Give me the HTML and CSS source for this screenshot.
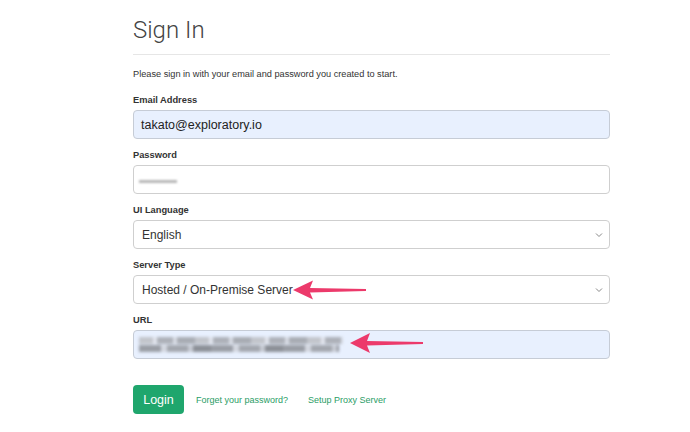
FILE: index.html
```html
<!DOCTYPE html>
<html lang="en">
<head>
<meta charset="UTF-8">
<meta name="viewport" content="width=device-width, initial-scale=1.0">
<title>Sign In</title>
<link rel="stylesheet" href="styles.css">
</head>
<body>
<div class="container">
  <h1>Sign In</h1>
  <p class="intro">Please sign in with your email and password you created to start.</p>

  <div class="field">
    <label>Email Address</label>
    <div class="input autofill">takato@exploratory.io</div>
  </div>
  <div class="field">
    <label>Password</label>
    <div class="input"><span class="blur-pass"></span></div>
  </div>
  <div class="field">
    <label>UI Language</label>
    <div class="input select">
      <span>English</span>
      <svg class="chevron" width="8" height="6" viewBox="0 0 8 6"><path d="M1 1.5 L4 4.5 L7 1.5" fill="none" stroke="#888" stroke-width="1"/></svg>
    </div>
  </div>
  <div class="field">
    <label>Server Type</label>
    <div class="input select">
      <span>Hosted / On-Premise Server</span>
      <svg class="chevron" width="8" height="6" viewBox="0 0 8 6"><path d="M1 1.5 L4 4.5 L7 1.5" fill="none" stroke="#888" stroke-width="1"/></svg>
    </div>
  </div>
  <div class="field">
    <label>URL</label>
    <div class="input autofill"><span class="blur-url"><i></i><i></i></span></div>
  </div>

  <div class="actions">
    <button>Login</button>
    <a href="#">Forget your password?</a>
    <a href="#">Setup Proxy Server</a>
  </div>

  <!-- annotation arrows -->
  <svg class="arrow arrow-server" width="80" height="22" viewBox="0 0 80 22">
    <path d="M0 11 L20 1.5 L17 9 L73 10 L73 12 L17 13.5 L20 20.5 Z" fill="#ec3a6b"/>
  </svg>
  <svg class="arrow arrow-url" width="80" height="22" viewBox="0 0 80 22">
    <path d="M0 11 L20 1 L17 9 L73 10 L73 12 L17 13.5 L20 21 Z" fill="#ec3a6b"/>
  </svg>
</div>
</body>
</html>
```

FILE: styles.css
```css
body {
  margin: 0;
  background: #ffffff;
  font-family: "Liberation Sans", Arial, sans-serif;
  color: #333;
}
.container {
  position: relative;
  width: 477px;
  margin-left: 133px;
  padding-top: 16px;
}
h1 {
  font-family: Roboto, "Liberation Sans", sans-serif;
  font-weight: 300;
  font-size: 24px;
  line-height: 28px;
  color: #444;
  margin: 0;
  padding-bottom: 10px;
  border-bottom: 1px solid #e6e6e6;
}
.intro {
  font-size: 9.2px;
  line-height: 12px;
  margin: 13px 0 14px;
  color: #333;
}
.field {
  margin-bottom: 10px;
}
label {
  display: block;
  font-size: 9.3px;
  font-weight: bold;
  line-height: 12px;
  margin-bottom: 4px;
  color: #333;
}
.input {
  box-sizing: border-box;
  height: 29px;
  border: 1px solid #cfcfcf;
  border-radius: 4px;
  padding: 0 7px;
  display: flex;
  align-items: center;
  font-size: 12.5px;
  color: #222;
  background: #fff;
}
.autofill {
  background: #e8f0fe;
  border-color: #c6ccd6;
}
.select {
  justify-content: space-between;
  padding-left: 8px;
  font-size: 12px;
  color: #333;
}
.chevron {
  margin-right: -1px;
}
.blur-pass {
  width: 38px;
  height: 3px;
  background: #b8b8b8;
  filter: blur(0.9px);
  margin-top: 3px;
  margin-left: -2px;
}
.blur-url {
  display: flex;
  flex-direction: column;
  gap: 1px;
  margin-left: -2px;
  filter: blur(1.6px);
}
.blur-url i {
  display: block;
  height: 7px;
  width: 204px;
  background: repeating-linear-gradient(90deg, #c2c5cc 0 14px, #e1e5ee 14px 18px, #adb1b9 18px 34px, #d8dce5 34px 38px, #a8acb4 38px 56px);
}
.blur-url i + i {
  width: 200px;
  background: repeating-linear-gradient(90deg, #9a9ea6 0 22px, #d3d7e0 22px 28px, #a3a7af 28px 49px, #c6cad3 49px 54px, #8c9098 54px 72px);
}
.actions {
  display: flex;
  align-items: center;
  margin-top: 26px;
}
button {
  font-family: "Liberation Sans", Arial, sans-serif;
  background: #1fa66d;
  color: #fff;
  border: none;
  border-radius: 4px;
  font-size: 12.5px;
  height: 29px;
  width: 51px;
  padding: 0;
  margin-right: 12px;
}
.actions a {
  color: #2b9d66;
  text-decoration: none;
  font-size: 9px;
  margin-right: 20px;
}
.arrow {
  position: absolute;
}
.arrow-server {
  left: 160px;
  top: 279px;
}
.arrow-url {
  left: 217px;
  top: 332px;
}
```
